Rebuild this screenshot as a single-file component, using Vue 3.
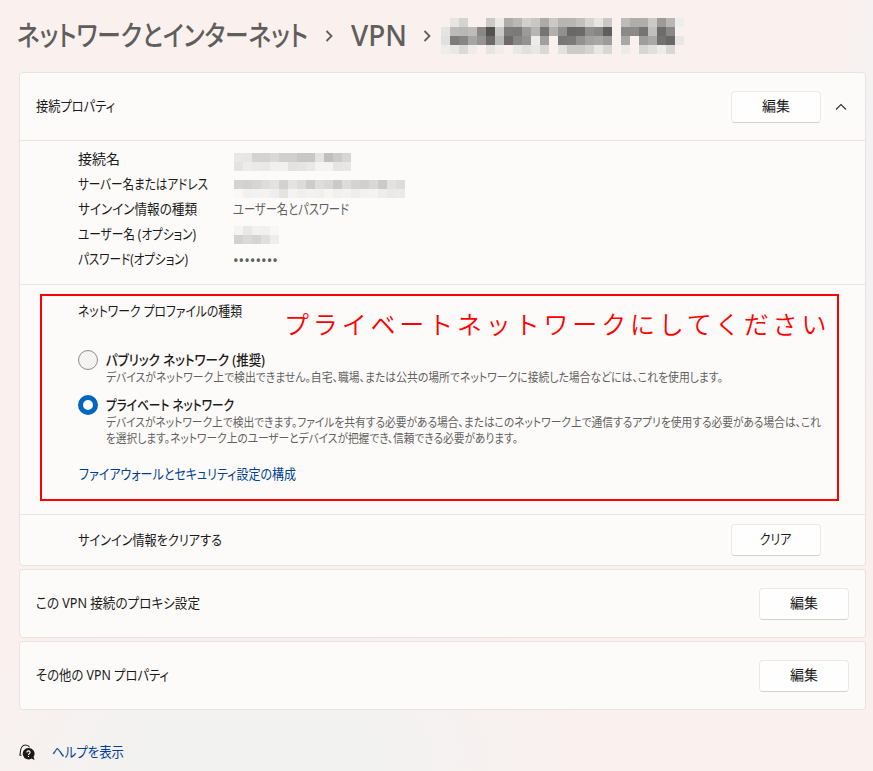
<script setup>
// Narrows or widens a line of text to the given width in pixels.
const vFit = {
  mounted(el, { value }) {
    const natural = el.getBoundingClientRect().width
    if (natural) el.style.transform = `scaleX(${value / natural})`
  },
}

// Each mosaic row is a list of brightness values; "--" leaves the cell empty.
function cells(rows, size = 9) {
  return rows.flatMap((row, y) =>
    row.split(' ').map((v, x) => ({ v, x: x * size, y: y * size })),
  ).filter((c) => c.v !== '--').map((c) => {
    const n = parseInt(c.v, 16)
    return { x: c.x, y: c.y, fill: `rgb(${n + 2},${n},${n - 1})` }
  })
}

const titleMosaic = cells([
  '-- e5 d3 -- -- c9 ea ad b8 d0 c7 ab c9 b5 b6 c0 d4 e6 c8 -- bc ad ae ca 9b b7 ed',
  'e4 bb b8 bc 88 52 c8 7c 7a 9b b5 74 b0 90 68 6a 8e 86 5e -- 8a 8a 74 bf 6c 88 --',
  'e0 7c 86 a5 94 6a b9 6a 86 92 ec a0 -- 77 7b 92 a2 a7 9c -- a8 -- 9e a8 72 68 e7',
  'ed e8 da ec -- e4 ee -- e8 e0 e7 d8 -- e1 cb cb d4 e7 d7 -- eb -- d6 e0 ec d7 --',
])

const details = [
  { label: '接続名', w: 42, mosaic: cells([
    'e8 e6 d3 d3 d9 cf cf c7 c7 e3 bf cb d6',
    'e3 ec ea e8 f0 f0 e2 e4 e8 f3 f3 e5 e7']), cols: 13, shift: 'low' },
  { label: 'サーバー名またはアドレス', w: 130, mosaic: cells([
    'd3 d1 d5 dc e2 d1 e3 db cc dd d8 ca dc d3 d0 d8 ca e2 dc',
    'f8 f1 f2 f3 ee e3 f3 f0 f2 f0 f5 f0 f2 ee f2 f3 ed e9 ea']), cols: 19, shift: 'lower' },
  { label: 'サインイン情報の種類', w: 119, text: 'ユーザー名とパスワード', tw: 116 },
  { label: 'ユーザー名 (オプション)', w: 118, mosaic: cells([
    'f4 e8 f1 f0 f7',
    'd2 d9 d4 df ed']), cols: 5, shift: 'none' },
  { label: 'パスワード(オプション)', w: 110, text: '••••••••', tw: 45, dots: true },
]
</script>

<template>
  <div class="page">
    <h1 class="crumbs">
      <span class="crumb first"><span v-fit="291" class="t">ネットワークとインターネット</span></span>
      <svg class="sep" width="8" height="12" viewBox="0 0 8 12"><path d="M1.5 1 6.5 6 1.5 11" /></svg>
      <span class="crumb second"><span v-fit="56" class="t">VPN</span></span>
      <svg class="sep" width="8" height="12" viewBox="0 0 8 12"><path d="M1.5 1 6.5 6 1.5 11" /></svg>
      <svg class="title-mosaic" width="243" height="36" shape-rendering="crispEdges">
        <rect v-for="(c, i) in titleMosaic" :key="i" :x="c.x" :y="c.y" width="9" height="9" :fill="c.fill" />
      </svg>
    </h1>

    <section class="card">
      <div class="row head">
        <span v-fit="79" class="t raised">接続プロパティ</span>
        <button class="btn">編集</button>
        <svg class="chev" width="12" height="8" viewBox="0 0 12 8"><path d="M1 6.5 6 1.5 11 6.5" /></svg>
      </div>

      <div class="details">
        <div v-for="d in details" :key="d.label" class="detail">
          <span class="label"><span v-fit="d.w" class="t">{{ d.label }}</span></span>
          <span v-if="d.text" v-fit="d.tw" :class="['t', 'value', { dots: d.dots }]">{{ d.text }}</span>
          <svg v-else :class="['mosaic', d.shift]" :width="d.cols * 9" height="18" shape-rendering="crispEdges">
            <rect v-for="(c, i) in d.mosaic" :key="i" :x="c.x" :y="c.y" width="9" height="9" :fill="c.fill" />
          </svg>
        </div>
      </div>

      <div class="profile">
        <div class="frame">
          <div class="frame-head">
            <span class="frame-title"><span v-fit="164" class="t">ネットワーク プロファイルの種類</span></span>
            <span class="note">プライベートネットワークにしてください</span>
          </div>
          <div class="option">
            <span class="radio"></span>
            <div class="lines">
              <div class="name"><span v-fit="159" class="t">パブリック ネットワーク (推奨)</span></div>
              <div class="desc"><span v-fit="617" class="t">デバイスがネットワーク上で検出できません。自宅、職場、または公共の場所でネットワークに接続した場合などには、これを使用します。</span></div>
            </div>
          </div>
          <div class="option">
            <span class="radio on"></span>
            <div class="lines">
              <div class="name"><span v-fit="128" class="t">プライベート ネットワーク</span></div>
              <div class="desc"><span v-fit="715" class="t">デバイスがネットワーク上で検出できます。ファイルを共有する必要がある場合、またはこのネットワーク上で通信するアプリを使用する必要がある場合は、これ</span></div>
              <div class="desc"><span v-fit="412" class="t">を選択します。ネットワーク上のユーザーとデバイスが把握でき、信頼できる必要があります。</span></div>
            </div>
          </div>
          <a class="link firewall"><span v-fit="217" class="t">ファイアウォールとセキュリティ設定の構成</span></a>
        </div>
      </div>

      <div class="row clear">
        <span v-fit="144" class="t">サインイン情報をクリアする</span>
        <button class="btn"><span v-fit="32" class="t mid">クリア</span></button>
      </div>
    </section>

    <section class="card single">
      <span v-fit="164" class="t raised">この VPN 接続のプロキシ設定</span>
      <button class="btn">編集</button>
    </section>
    <section class="card single">
      <span v-fit="133" class="t raised">その他の VPN プロパティ</span>
      <button class="btn">編集</button>
    </section>

    <div class="help">
      <svg width="17" height="17" viewBox="0 0 17 17">
        <path class="head-line" d="M.5 11.300c.8-.8 .9-1.800 .8-3C1.500 4.200 3.500 1 6.500 1c2 0 3.300 .9 4.100 2.300M.5 11.300h2" />
        <path class="bubble" d="M9.500 4a5.700 5.700 0 1 0 3 10.500l3 1.500-.9-3.200A5.700 5.700 0 0 0 9.500 4Z" />
        <path class="q" d="M7.900 8.400c0-2 3.200-2 3.200 0 0 1.200-1.600 1.200-1.600 2.500M9.500 12v1.100" />
      </svg>
      <a class="link"><span v-fit="72" class="t">ヘルプを表示</span></a>
    </div>
  </div>
</template>

<style>
body {
  overflow: hidden;
}
</style>

<style scoped>
.page {
  box-sizing: border-box;
  width: 873px;
  height: 771px;
  padding: 0 7px 0 19px;
  overflow: hidden;
  font-family: "Noto Sans", "Noto Sans CJK JP", sans-serif;
  font-size: 14px;
  line-height: 20px;
  color: #1b1a1a;
  background:
    radial-gradient(ellipse 330px 190px at 260px 760px, #f2f2f1 35%, rgba(242, 242, 241, 0) 100%),
    radial-gradient(ellipse 50px 320px at 880px 200px, #f4f2f3 30%, rgba(244, 242, 243, 0) 100%),
    #faf0ee;
}
.t {
  display: inline-block;
  white-space: pre;
  font-feature-settings: "palt";
  transform-origin: left center;
}
.mid {
  transform-origin: center;
}
.raised {
  margin-bottom: 2px;
}
.crumbs {
  display: flex;
  align-items: center;
  height: 72px;
  margin: 0;
  font-size: 28px;
  font-weight: 500;
  line-height: 40px;
  color: #605e5d;
}
.crumb {
  flex: none;
  padding-bottom: 3px;
}
.first {
  width: 307px;
  margin-left: -2px;
}
.second {
  width: 72px;
  margin-left: 18px;
}
.sep {
  flex: none;
  margin-bottom: 1px;
  fill: none;
  stroke: #605e5d;
  stroke-width: 1.8;
}
.first + .sep {
  margin-left: 1px;
}
.title-mosaic {
  flex: none;
  margin-left: 10px;
}
.card {
  box-sizing: border-box;
  width: 847px;
  margin-bottom: 3px;
  border: 1px solid #e9e2e0;
  border-radius: 4px;
  background: #fcfbf9;
}
.row {
  display: flex;
  align-items: center;
}
.head {
  height: 67px;
  padding: 0 18px 0 16px;
}
.btn {
  box-sizing: border-box;
  flex: none;
  width: 90px;
  height: 32px;
  margin-left: auto;
  padding: 0 0 2px;
  border: 1px solid #ebe9e8;
  border-bottom-color: #d2d1d0;
  border-radius: 4px;
  background: #fefefe;
  color: #1b1a1a;
  font: inherit;
}
.chev {
  margin-left: 14px;
  fill: none;
  stroke: #333;
  stroke-width: 1.2;
}
.details {
  box-sizing: border-box;
  height: 144px;
  padding: 6px 0 0 58px;
  border-top: 1px solid #ebe2df;
}
.detail {
  display: flex;
  align-items: center;
  height: 25px;
}
.label {
  width: 155px;
  padding-bottom: 1px;
}
.value {
  padding-bottom: 1px;
  color: #626160;
}
.dots {
  padding: 2px 0 0;
}
.mosaic {
  margin-left: 1px;
}
.low {
  margin-top: 4px;
}
.lower {
  margin-top: 8px;
}
.profile {
  box-sizing: border-box;
  height: 230px;
  padding: 9px 0 0 20px;
  border-top: 1px solid #ebe4e2;
}
.frame {
  box-sizing: border-box;
  width: 799px;
  height: 207px;
  padding-left: 36px;
  border: 2px solid #f00;
}
.frame-head {
  display: flex;
  height: 54px;
}
.frame-title {
  width: 206px;
  line-height: 29px;
}
.note {
  font-family: "Noto Sans CJK JP", sans-serif;
  font-size: 25px;
  font-weight: 350;
  line-height: 54px;
  letter-spacing: 3.830px;
  white-space: nowrap;
  color: #f00;
}
.option {
  display: flex;
  margin-bottom: 9px;
}
.radio {
  box-sizing: border-box;
  flex: none;
  width: 20px;
  height: 20px;
  margin-right: 8px;
  border: 1px solid #8b8a89;
  border-radius: 50%;
  background: #f4f3f1;
}
.radio.on {
  border: 5px solid #0067c0;
  background: #fff;
}
.lines {
  width: 720px;
}
.name {
  height: 20px;
  font-weight: 500;
}
.desc {
  height: 16px;
  font-size: 12px;
  line-height: 16px;
  color: #626160;
}
.link {
  color: #003e92;
}
.firewall {
  display: block;
  margin: 17px 0 0 1px;
}
.clear {
  box-sizing: border-box;
  height: 51px;
  padding: 0 44px 0 58px;
  border-top: 1px solid #ebe4e2;
}
.single {
  display: flex;
  align-items: center;
  height: 69px;
  padding: 1px 16px 0;
}
.help {
  display: flex;
  align-items: center;
  height: 20px;
  margin-top: 32px;
}
.help svg {
  flex: none;
  margin-right: 16px;
}
.head-line {
  fill: none;
  stroke: #222;
  stroke-width: 1.1;
}
.bubble {
  fill: #191919;
}
.q {
  fill: none;
  stroke: #fff;
  stroke-width: 1.1;
}
</style>
